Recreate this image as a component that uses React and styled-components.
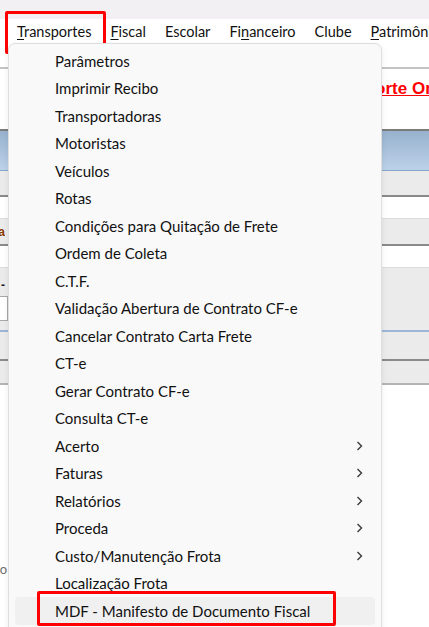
import styled, { createGlobalStyle } from "styled-components";

const GlobalStyle = createGlobalStyle`
  html, body {
    margin: 0;
    padding: 0;
    background: #ffffff;
    overflow: hidden;
  }
  body {
    font-family: Lato, "Noto Sans", sans-serif;
    color: #1b1b1b;
  }
`;

const Screen = styled.div`
  position: relative;
  width: 429px;
  height: 627px;
  overflow: hidden;
  background: #ffffff;
`;

const TitleStrip = styled.div`
  height: 19px;
  background: #f3f0f3;
`;

const MenuBar = styled.div`
  display: flex;
  align-items: center;
  gap: 19px;
  height: 24px;
  padding-left: 17px;
  background: #ffffff;
  font-size: 14.5px;
  white-space: nowrap;
`;

const BarItem = styled.span`
  color: #111111;
`;

const Key = styled.span`
  text-decoration: underline;
  text-underline-offset: 2px;
`;

const Toolbar = styled.div`
  height: 24px;
  background: #ffffff;
  border-bottom: 2px solid #c4c4c4;
`;

const Banner = styled.div`
  display: flex;
  align-items: flex-start;
  height: 60px;
  padding-left: 343px;
  background: #ffffff;
  border-bottom: 2px solid #7c7c7c;
`;

const SupportLink = styled.span`
  margin-top: 10px;
  color: #ff0000;
  font-family: "Liberation Sans", sans-serif;
  font-weight: bold;
  font-size: 17px;
  text-decoration: underline;
  white-space: nowrap;
`;

const Band = styled.div`
  display: flex;
  align-items: center;
  height: ${(p) => p.$h}px;
  background: ${(p) => p.$bg || "#ebebeb"};
  border-bottom: ${(p) => p.$line || "none"};
  overflow: hidden;
`;

const EdgeLabel = styled.span`
  display: flex;
  justify-content: flex-end;
  width: 5px;
  overflow: hidden;
  font-family: "Liberation Sans", sans-serif;
  font-weight: bold;
  font-size: 12px;
  color: ${(p) => p.$color || "#1b1b1b"};
  white-space: nowrap;
`;

const EdgeInput = styled.div`
  width: 7px;
  height: 23px;
  margin-top: 4px;
  background: #ffffff;
  border: 1px solid #a8a8a8;
  border-left: none;
`;

const LowerArea = styled.div`
  display: flex;
  align-items: flex-end;
  height: 240px;
  padding-bottom: 48px;
  box-sizing: border-box;
  background: #ffffff;
`;

const SmallGrey = styled.span`
  display: flex;
  justify-content: flex-end;
  width: 7px;
  overflow: hidden;
  font-size: 13px;
  color: #6e6e6e;
  white-space: nowrap;
`;

const Dropdown = styled.div`
  position: absolute;
  left: 8px;
  top: 43px;
  width: 374px;
  height: 600px;
  box-sizing: border-box;
  padding: 3px 6px 0;
  background: #f9f9f9;
  border: 1px solid #dedede;
  border-radius: 7px;
  box-shadow: 0 2px 6px rgba(0, 0, 0, 0.08);
`;

const Item = styled.div`
  position: relative;
  display: flex;
  align-items: center;
  justify-content: space-between;
  height: 27.5px;
  padding: 0 12px 0 40px;
  border-radius: 4px;
  font-size: 15px;
  color: #111111;
  white-space: nowrap;
  background: ${(p) => (p.$hover ? "#f0f0f0" : "transparent")};
`;

const Chevron = () => (
  <svg width="7" height="10" viewBox="0 0 7 10">
    <path d="M1.5 1 L5.5 5 L1.5 9" fill="none" stroke="#3a3a3a" strokeWidth="1.4" />
  </svg>
);

const Callout = styled.div`
  position: absolute;
  border: 3px solid #ff0000;
  border-radius: 2px;
  pointer-events: none;
`;

const TopCallout = styled(Callout)`
  left: 5px;
  top: 11px;
  width: 95px;
  height: 37px;
`;

const ItemCallout = styled(Callout)`
  left: 22px;
  top: -6px;
  width: 293px;
  height: 29px;
`;

const items = [
  { label: "Parâmetros" },
  { label: "Imprimir Recibo" },
  { label: "Transportadoras" },
  { label: "Motoristas" },
  { label: "Veículos" },
  { label: "Rotas" },
  { label: "Condições para Quitação de Frete" },
  { label: "Ordem de Coleta" },
  { label: "C.T.F." },
  { label: "Validação Abertura de Contrato CF-e" },
  { label: "Cancelar Contrato Carta Frete" },
  { label: "CT-e" },
  { label: "Gerar Contrato CF-e" },
  { label: "Consulta CT-e" },
  { label: "Acerto", sub: true },
  { label: "Faturas", sub: true },
  { label: "Relatórios", sub: true },
  { label: "Proceda", sub: true },
  { label: "Custo/Manutenção Frota", sub: true },
  { label: "Localização Frota" },
  { label: "MDF - Manifesto de Documento Fiscal", hover: true, marked: true },
];

export default function App() {
  return (
    <>
      <GlobalStyle />
      <Screen>
        <TitleStrip />
        <MenuBar>
          <BarItem><Key>T</Key>ransportes</BarItem>
          <BarItem><Key>F</Key>iscal</BarItem>
          <BarItem>Escolar</BarItem>
          <BarItem>Fi<Key>n</Key>anceiro</BarItem>
          <BarItem>Clube</BarItem>
          <BarItem><Key>P</Key>atrimônio</BarItem>
        </MenuBar>
        <Toolbar />
        <Banner>
          <SupportLink>Suporte Online</SupportLink>
        </Banner>
        <Band $h={39} $bg="linear-gradient(#97b1cd, #bcd2e9)" $line="1px solid #86a6cb" />
        <Band $h={24} $line="2px solid #8a8a8a" />
        <Band $h={21} $bg="#ffffff" $line="1px solid #dcdcdc" />
        <Band $h={25} $line="2px solid #8a8a8a">
          <EdgeLabel $color="#8a3a00">Placa</EdgeLabel>
        </Band>
        <Band $h={21} $bg="#ffffff" $line="1px solid #dcdcdc" />
        <Band $h={62} $line="2px solid #9bb6d6">
          <div>
            <EdgeLabel>Nº -</EdgeLabel>
            <EdgeInput />
          </div>
        </Band>
        <Band $h={27} $line="2px solid #8a8a8a" />
        <Band $h={22} $line="2px solid #b4b4b4" />
        <LowerArea>
          <SmallGrey>Info</SmallGrey>
        </LowerArea>

        <TopCallout />

        <Dropdown>
          {items.map((it) => (
            <Item key={it.label} $hover={it.hover}>
              <span>{it.label}</span>
              {it.sub && <Chevron />}
              {it.marked && <ItemCallout />}
            </Item>
          ))}
        </Dropdown>
      </Screen>
    </>
  );
}
